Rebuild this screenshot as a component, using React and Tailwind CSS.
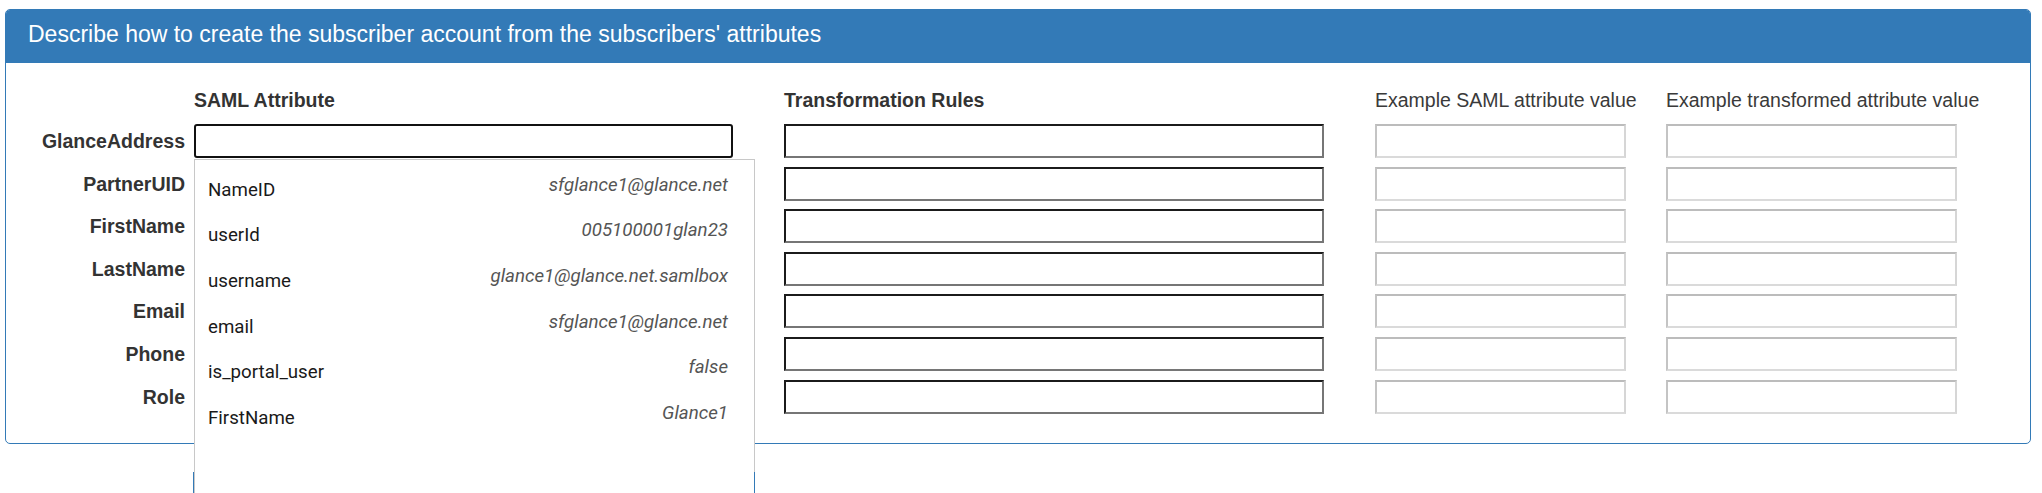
import React from 'react'

const FIELDS = ['GlanceAddress', 'PartnerUID', 'FirstName', 'LastName', 'Email', 'Phone', 'Role']

const OPTIONS = [
  ['NameID', 'sfglance1@glance.net'],
  ['userId', '005100001glan23'],
  ['username', 'glance1@glance.net.samlbox'],
  ['email', 'sfglance1@glance.net'],
  ['is_portal_user', 'false'],
  ['FirstName', 'Glance1'],
]

const darkInput =
  'h-[34px] border-2 border-t-[#1b1b1b] border-l-[#1b1b1b] border-b-[#767676] border-r-[#767676] bg-white'
const lightInput =
  'h-[34px] border-2 border-t-[#bcbcbc] border-l-[#c4c4c4] border-b-[#dadada] border-r-[#d6d6d6] bg-white'

function Dropdown() {
  return (
    <div className="absolute left-0 top-full z-10 mt-[1px] h-[340px] w-[561px] border border-[#c8c8c8] bg-white pt-[13.6px] font-['Roboto',sans-serif]">
      {OPTIONS.map(([name, value], i) => (
        <div key={i} className="flex h-[45.7px] items-start justify-between pl-[13px] pr-[26px] text-[18.7px] leading-[22px]">
          <span className="pt-[5px] text-[#1a1a1a]">{name}</span>
          <span className="italic text-[#555]">{value}</span>
        </div>
      ))}
      {/* edge of the element sitting behind the menu */}
      <div className="absolute bottom-0 left-[-2px] right-[-1px] top-[312px] border-x border-[#337ab7]" />
    </div>
  )
}

export default function App() {
  return (
    <div className="min-h-[493px] bg-white pl-[5px] pt-[9px] font-['Liberation_Sans',Arial,sans-serif] text-[#333]">
      <div className="w-[2026px] overflow-visible rounded-[5px] border border-[#337ab7]">
        <div className="h-[53px] rounded-t-[4px] bg-[#337ab7] pl-[22px] pt-[12px] text-[23px] leading-[25px] text-white">
          Describe how to create the subscriber account from the subscribers' attributes
        </div>

        <div className="pb-[29px] pt-[23px] text-[19.5px]">
          {/* column headings */}
          <div className="mb-[10px] flex h-[28px] leading-[28px]">
            <div className="w-[188px]" />
            <div className="w-[590px] font-bold">SAML Attribute</div>
            <div className="w-[591px] font-bold">Transformation Rules</div>
            <div className="w-[291px] text-[#3a3a3a]">Example SAML attribute value</div>
            <div className="text-[#3a3a3a]">Example transformed attribute value</div>
          </div>

          <div className="flex flex-col gap-[8.6px]">
            {FIELDS.map((f, i) => (
              <div key={f} className="flex items-center">
                <div className="w-[179px] text-right font-bold leading-[22px]">{f}</div>
                <div className="relative ml-[9px] w-[539px]">
                  {i === 0 ? (
                    <>
                      <div className="h-[34px] rounded-[3px] border-2 border-[#111] bg-white" />
                      <Dropdown />
                    </>
                  ) : (
                    <div className={darkInput} />
                  )}
                </div>
                <div className={`ml-[51px] w-[540px] ${darkInput}`} />
                <div className={`ml-[51px] w-[251px] ${lightInput}`} />
                <div className={`ml-[40px] w-[291px] ${lightInput}`} />
              </div>
            ))}
          </div>
        </div>
      </div>
    </div>
  )
}
